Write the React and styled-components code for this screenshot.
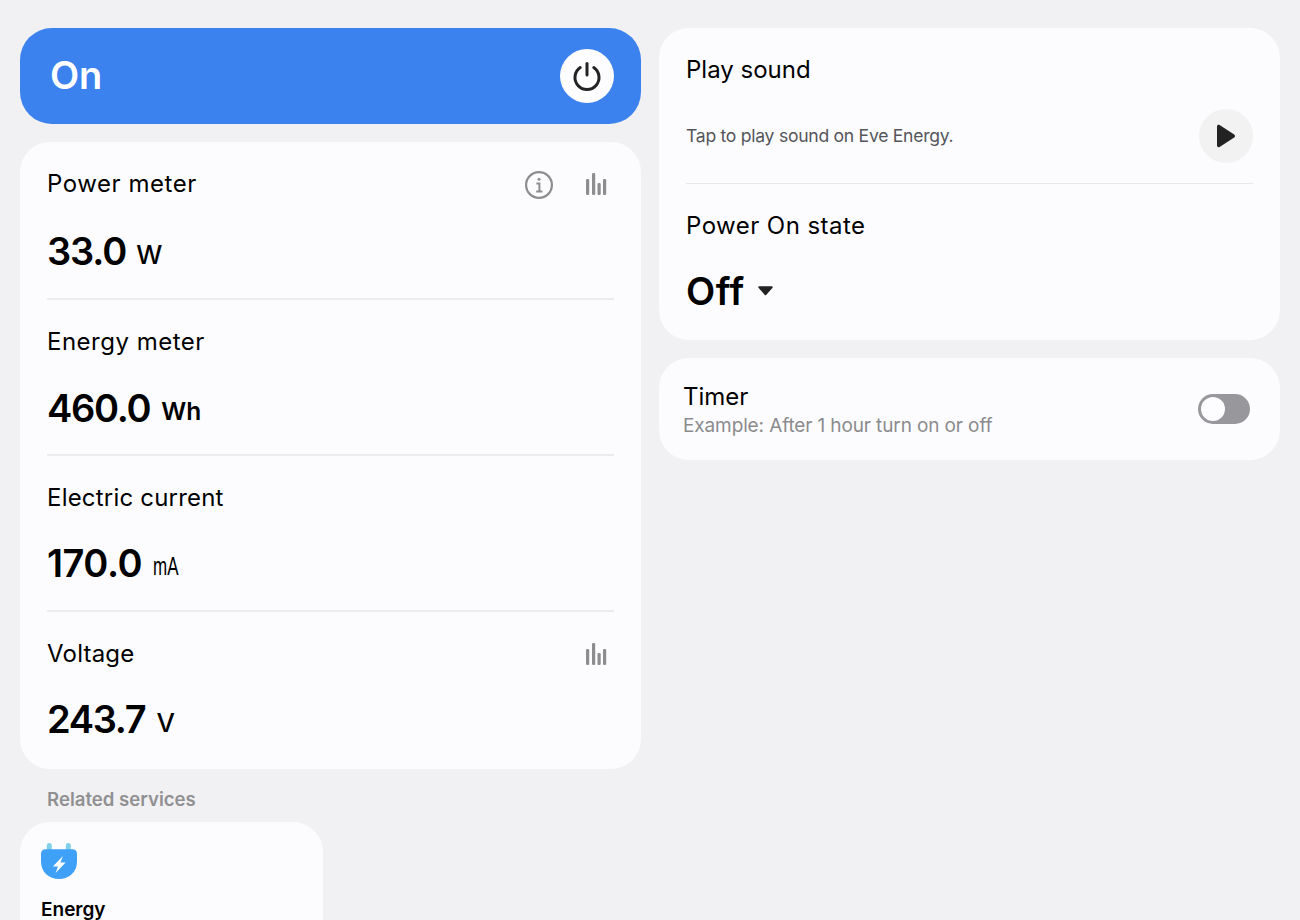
import React from "react";
import styled, { createGlobalStyle } from "styled-components";

const Global = createGlobalStyle`
  html, body { margin: 0; padding: 0; height: 920px; overflow: hidden; background: #f1f1f3; }
  body { font-family: Inter, "Noto Sans", sans-serif; color: #000; }
`;
const Page = styled.div`
  display: grid; grid-template-columns: 621px 621px; column-gap: 18px;
  padding: 28px 20px 0; height: 892px; overflow: hidden; align-items: start;
`;
const Column = styled.div`display: flex; flex-direction: column;`;
const PowerBar = styled.div`
  height: 96px; border-radius: 32px; background: #3b82ee; color: #fff;
  display: flex; align-items: center; justify-content: space-between;
  padding: 0 27px 0 30px; margin-bottom: 18px;
`;
const PowerLabel = styled.div`font-size: 38px; font-weight: 600; letter-spacing: -0.2px; margin-top: -2px;`;
const PowerButton = styled.div`
  width: 54px; height: 54px; border-radius: 50%; background: #fdfdff;
  display: flex; align-items: center; justify-content: center;
`;
const Card = styled.div`
  background: #fcfcfe; border-radius: 30px; padding: 0 27px;
`;
const MeterRow = styled.div`
  height: ${p => p.$h}px; box-sizing: border-box; padding-top: 27px;
  border-bottom: ${p => (p.$last ? "none" : "2px solid #ececee")};
`;
const LabelRow = styled.div`display: flex; align-items: center; height: 30px;`;
const Label = styled.div`
  font-size: 24px; line-height: 30px; flex: 1; white-space: nowrap; letter-spacing: ${p => p.$track}px;
`;
const IconGroup = styled.div`display: flex; align-items: center; gap: 32px; color: #8d8d8f; margin-right: 7px; margin-top: 2px;`;
const Value = styled.div`
  margin-top: ${p => p.$gap}px; height: 48px; display: flex; align-items: center; gap: ${p => p.$unitGap}px; white-space: nowrap;
`;
const Number = styled.span`font-size: 38px; font-weight: 600; letter-spacing: ${p => p.$track}px;`;
const Unit = styled.span`
  font-size: ${p => p.$size}px; font-weight: ${p => p.$weight}; margin-top: 6px;
  ${p => p.$narrow && "font-family: 'Liberation Sans', sans-serif; display: inline-block; transform: scaleX(.68); transform-origin: left;"}
`;
const RelatedTitle = styled.div`
  font-size: 18.6px; font-weight: 600; color: #909092; padding-left: 27px; margin-top: 18px; line-height: 24px; margin-bottom: 11px;
`;
const ServiceCard = styled.div`
  width: 303px; height: 130px; box-sizing: border-box; background: #fcfcfe; border-radius: 30px; padding: 20px 21px;
`;
const ServiceName = styled.div`font-size: 19px; font-weight: 600; margin-top: 18px; line-height: 24px;`;
const SettingsCard = styled(Card)`height: 312px; margin-bottom: 18px; box-sizing: border-box; padding: 27px 27px 0;`;
const SectionTitle = styled.div`font-size: 24px; line-height: 30px; letter-spacing: ${p => p.$track}px;`;
const PlayRow = styled.div`
  display: flex; align-items: center; justify-content: space-between;
  margin-top: 24px; padding-bottom: 20px; border-bottom: 1px solid #e8e8ea; margin-bottom: 27px;
`;
const Hint = styled.div`font-size: 17.6px; color: #55555a; letter-spacing: -0.28px; margin-top: -2px;`;
const PlayButton = styled.div`
  width: 54px; height: 54px; border-radius: 50%; background: #f2f2f2;
  display: flex; align-items: center; justify-content: center;
`;
const StateValue = styled.div`display: flex; align-items: center; gap: 13px; margin-top: 26px; height: 48px;`;
const StateText = styled.span`font-size: 38px; font-weight: 600; letter-spacing: 0.6px;`;
const TimerCard = styled(Card)`
  height: 102px; box-sizing: border-box; padding: 0 30px 0 24px;
  display: flex; align-items: center; justify-content: space-between;
`;
const TimerText = styled.div`display: flex; flex-direction: column; margin-top: 3px;`;
const TimerTitle = styled.div`font-size: 24px; line-height: 30px; letter-spacing: 0;`;
const TimerSub = styled.div`font-size: 19px; line-height: 26px; color: #8b8b8d; margin-top: 1px; letter-spacing: -0.12px;`;
const Toggle = styled.div`
  width: 52px; height: 30px; border-radius: 15px; background: #98989c; box-sizing: border-box;
  padding: 3px; display: flex; justify-content: flex-start;
`;
const Knob = styled.div`width: 24px; height: 24px; border-radius: 50%; background: #fdfdff;`;

const PowerIcon = () => (
  <svg width="30" height="30" viewBox="0 0 30 30" fill="none" stroke="#232323" strokeWidth="3" strokeLinecap="round">
    <path d="M15 2.5V14" />
    <path d="M8.2 6.6a12 12 0 1 0 13.6 0" />
  </svg>
);
const InfoIcon = () => (
  <svg width="28" height="28" viewBox="0 0 28 28" fill="none" stroke="currentColor" strokeWidth="2.2">
    <circle cx="14" cy="14" r="12.9" />
    <circle cx="14" cy="8.2" r="1.5" fill="currentColor" stroke="none" />
    <path d="M11.4 12.6H14.4V20.6M11.2 20.6H17.4" strokeWidth="2" />
  </svg>
);
const BarsIcon = () => (
  <svg width="22" height="24" viewBox="0 0 22 24" fill="currentColor">
    <rect x="1" y="6" width="3.2" height="16" rx="1.2" />
    <rect x="7" y="0" width="3.2" height="22" rx="1.2" />
    <rect x="12.5" y="10" width="3.2" height="12" rx="1.2" />
    <rect x="18" y="6" width="3.2" height="16" rx="1.2" />
  </svg>
);
const PlayIcon = () => (
  <svg width="20" height="24" viewBox="0 0 20 24" fill="#232323">
    <path d="M1 2.5C1 1 2.4.3 3.6 1l14.6 9.4c1.1.7 1.1 2.4 0 3.1L3.6 23c-1.2.7-2.6 0-2.6-1.4z" />
  </svg>
);
const CaretIcon = () => (
  <svg width="15" height="10" viewBox="0 0 16 10" fill="#222">
    <path d="M1.2 0h13.6c.8 0 1.2.9.7 1.5L8.7 9.3c-.4.4-1 .4-1.4 0L.5 1.5C0 .9.4 0 1.2 0z" />
  </svg>
);
const PlugIcon = () => (
  <svg width="36" height="38" viewBox="0 0 36 38" display="block">
    <rect x="5.8" y="1" width="5" height="10" rx="2.4" fill="#7fd0ea" />
    <rect x="24.8" y="1" width="5" height="10" rx="2.4" fill="#7fd0ea" />
    <path d="M0 12c0-3 1.6-4.8 4.6-4.8h26.8c3 0 4.6 1.8 4.6 4.8v7.5C36 30 28 37 18 37S0 30 0 19.5z" fill="#3fa0f8" />
    <path d="M22 14 11.8 24.4h5.2L14.6 31l10-10.6h-5.2z" fill="#fff" />
  </svg>
);

const meters = [
  { label: "Power meter", track: 0.55, value: "33.0", numTrack: -1.1, unit: "W", h: 158, gap: 28, unitGap: 10, size: 26, weight: 500, icons: "both" },
  { label: "Energy meter", track: 0.5, value: "460.0", numTrack: -1.3, unit: "Wh", h: 156, gap: 27, unitGap: 11, size: 24.5, weight: 600 },
  { label: "Electric current", track: 0.2, value: "170.0", numTrack: -0.5, unit: "mA", h: 156, gap: 26, unitGap: 11, size: 25, weight: 400, narrow: true },
  { label: "Voltage", track: 0.2, value: "243.7", numTrack: -1.3, unit: "V", h: 157, gap: 26, unitGap: 11, size: 26, weight: 500, icons: "bars", last: true },
];

export default function App() {
  return (
    <>
      <Global />
      <Page>
        <Column>
          <PowerBar>
            <PowerLabel>On</PowerLabel>
            <PowerButton><PowerIcon /></PowerButton>
          </PowerBar>
          <Card>
            {meters.map(m => (
              <MeterRow key={m.label} $h={m.h} $last={m.last}>
                <LabelRow>
                  <Label $track={m.track}>{m.label}</Label>
                  {m.icons && (
                    <IconGroup>
                      {m.icons === "both" && <InfoIcon />}
                      <BarsIcon />
                    </IconGroup>
                  )}
                </LabelRow>
                <Value $gap={m.gap} $unitGap={m.unitGap}>
                  <Number $track={m.numTrack}>{m.value}</Number>
                  <Unit $size={m.size} $weight={m.weight} $narrow={m.narrow}>{m.unit}</Unit>
                </Value>
              </MeterRow>
            ))}
          </Card>
          <RelatedTitle>Related services</RelatedTitle>
          <ServiceCard>
            <PlugIcon />
            <ServiceName>Energy</ServiceName>
          </ServiceCard>
        </Column>
        <Column>
          <SettingsCard>
            <SectionTitle $track={0}>Play sound</SectionTitle>
            <PlayRow>
              <Hint>Tap to play sound on Eve Energy.</Hint>
              <PlayButton><PlayIcon /></PlayButton>
            </PlayRow>
            <SectionTitle $track={0.45}>Power On state</SectionTitle>
            <StateValue>
              <StateText>Off</StateText>
              <CaretIcon />
            </StateValue>
          </SettingsCard>
          <TimerCard>
            <TimerText>
              <TimerTitle>Timer</TimerTitle>
              <TimerSub>Example: After 1 hour turn on or off</TimerSub>
            </TimerText>
            <Toggle><Knob /></Toggle>
          </TimerCard>
        </Column>
      </Page>
    </>
  );
}
